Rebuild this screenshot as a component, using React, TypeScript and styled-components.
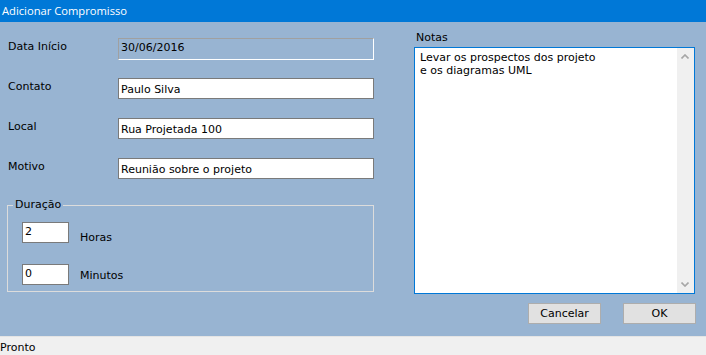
import React from "react";
import styled, { createGlobalStyle } from "styled-components";

const Global = createGlobalStyle`
  html, body { margin: 0; padding: 0; background: #98b4d2; }
  body { font-family: "DejaVu Sans", Verdana, sans-serif; font-size: 11px; color: #000; }
  * { box-sizing: border-box; }
`;

const Window = styled.div`
  width: 706px;
  height: 355px;
  display: flex;
  flex-direction: column;
  background: #98b4d2;
  overflow: hidden;
`;

const TitleBar = styled.div`
  height: 22px;
  flex: none;
  background: #0078d7;
  color: #fff;
  font-family: "Open Sans", "Liberation Sans", sans-serif;
  font-size: 11.2px;
  display: flex;
  align-items: center;
  padding-left: 2px;
  padding-bottom: 2px;
`;

const Body = styled.div`
  flex: 1;
  display: flex;
  gap: 40px;
  padding: 0 0 0 7px;
`;

const LeftCol = styled.div`
  width: 367px;
  display: flex;
  flex-direction: column;
  padding-top: 16px;
`;

const FieldRow = styled.div`
  height: 40px;
  display: flex;
  align-items: flex-start;
`;

const Label = styled.div`
  width: 111px;
  padding-left: 1px;
  padding-top: 2px;
  line-height: 14px;
`;

const TextBox = styled.div<{ $readOnly?: boolean }>`
  width: 256px;
  height: ${(p) => (p.$readOnly ? 22 : 21)}px;
  padding: ${(p) => (p.$readOnly ? "2px 2px" : "4px 2px")};
  line-height: 14px;
  white-space: nowrap;
  background: ${(p) => (p.$readOnly ? "transparent" : "#fff")};
  border: 1px solid #7a7a7a;
  ${(p) => p.$readOnly && `border-color: #a0a0a0 #ffffff #ffffff #a0a0a0;`}
`;

const Group = styled.fieldset`
  margin: 0;
  padding: 10px 0 0 14px;
  border: 1px solid #dcdcdc;
  height: 94px;
  display: flex;
  flex-direction: column;
  gap: 19px;
  min-width: 0;
`;

const Legend = styled.legend`
  padding: 0 2px;
  margin-left: -9px;
  line-height: 14px;
`;

const SmallRow = styled.div`
  display: flex;
  align-items: flex-start;
  gap: 11px;
`;

const SmallBox = styled.div`
  width: 47px;
  height: 21px;
  background: #fff;
  border: 1px solid #7a7a7a;
  padding: 2px 2px;
  line-height: 14px;
`;

const SmallLabel = styled.div<{ $top: number }>`
  padding-top: ${(p) => p.$top}px;
  line-height: 14px;
`;

const RightCol = styled.div`
  width: 281px;
  display: flex;
  flex-direction: column;
  padding-top: 9px;
`;

const NotesLabel = styled.div`
  line-height: 14px;
  padding-left: 2px;
  height: 16px;
`;

const NotesBox = styled.div`
  height: 247px;
  border: 1px solid #0078d7;
  background: #fff;
  display: flex;
`;

const NotesText = styled.div`
  flex: 1;
  padding: 3px 5px;
  line-height: 13px;
  white-space: pre;
`;

const ScrollTrack = styled.div`
  width: 17px;
  background: #f0f0f0;
  display: flex;
  flex-direction: column;
  justify-content: space-between;
  align-items: center;
  padding: 6px 2px 6px 0;
`;

const ButtonRow = styled.div`
  display: flex;
  justify-content: flex-end;
  gap: 22px;
  margin-top: 9px;
  margin-right: -1px;
`;

const Button = styled.div`
  width: 73px;
  height: 21px;
  background: #e1e1e1;
  border: 1px solid #adadad;
  display: flex;
  align-items: center;
  justify-content: center;
  line-height: 14px;
`;

const StatusBar = styled.div`
  height: 19px;
  flex: none;
  background: #f0f0f0;
  border-top: 1px solid #e4e4e4;
  display: flex;
  align-items: center;
  padding-top: 4px;
  line-height: 14px;
`;

const Chevron = ({ up }: { up?: boolean }) => (
  <svg width="8" height="5" viewBox="0 0 8 5">
    <path
      d={up ? "M0.5 4.5 L4 1 L7.5 4.5" : "M0.5 0.5 L4 4 L7.5 0.5"}
      fill="none"
      stroke="#a6a6a6"
      strokeWidth="1.6"
    />
  </svg>
);

export default function App() {
  return (
    <Window>
      <Global />
      <TitleBar>Adicionar Compromisso</TitleBar>
      <Body>
        <LeftCol>
          <FieldRow>
            <Label>Data Início</Label>
            <TextBox $readOnly>30/06/2016</TextBox>
          </FieldRow>
          <FieldRow>
            <Label>Contato</Label>
            <TextBox>Paulo Silva</TextBox>
          </FieldRow>
          <FieldRow>
            <Label>Local</Label>
            <TextBox>Rua Projetada 100</TextBox>
          </FieldRow>
          <FieldRow>
            <Label>Motivo</Label>
            <TextBox>Reunião sobre o projeto</TextBox>
          </FieldRow>
          <Group>
            <Legend>Duração</Legend>
            <SmallRow>
              <SmallBox>2</SmallBox>
              <SmallLabel $top={9}>Horas</SmallLabel>
            </SmallRow>
            <SmallRow>
              <SmallBox>0</SmallBox>
              <SmallLabel $top={5}>Minutos</SmallLabel>
            </SmallRow>
          </Group>
        </LeftCol>
        <RightCol>
          <NotesLabel>Notas</NotesLabel>
          <NotesBox>
            <NotesText>{"Levar os prospectos dos projeto\ne os diagramas UML"}</NotesText>
            <ScrollTrack>
              <Chevron up />
              <Chevron />
            </ScrollTrack>
          </NotesBox>
          <ButtonRow>
            <Button>Cancelar</Button>
            <Button>OK</Button>
          </ButtonRow>
        </RightCol>
      </Body>
      <StatusBar>Pronto</StatusBar>
    </Window>
  );
}
